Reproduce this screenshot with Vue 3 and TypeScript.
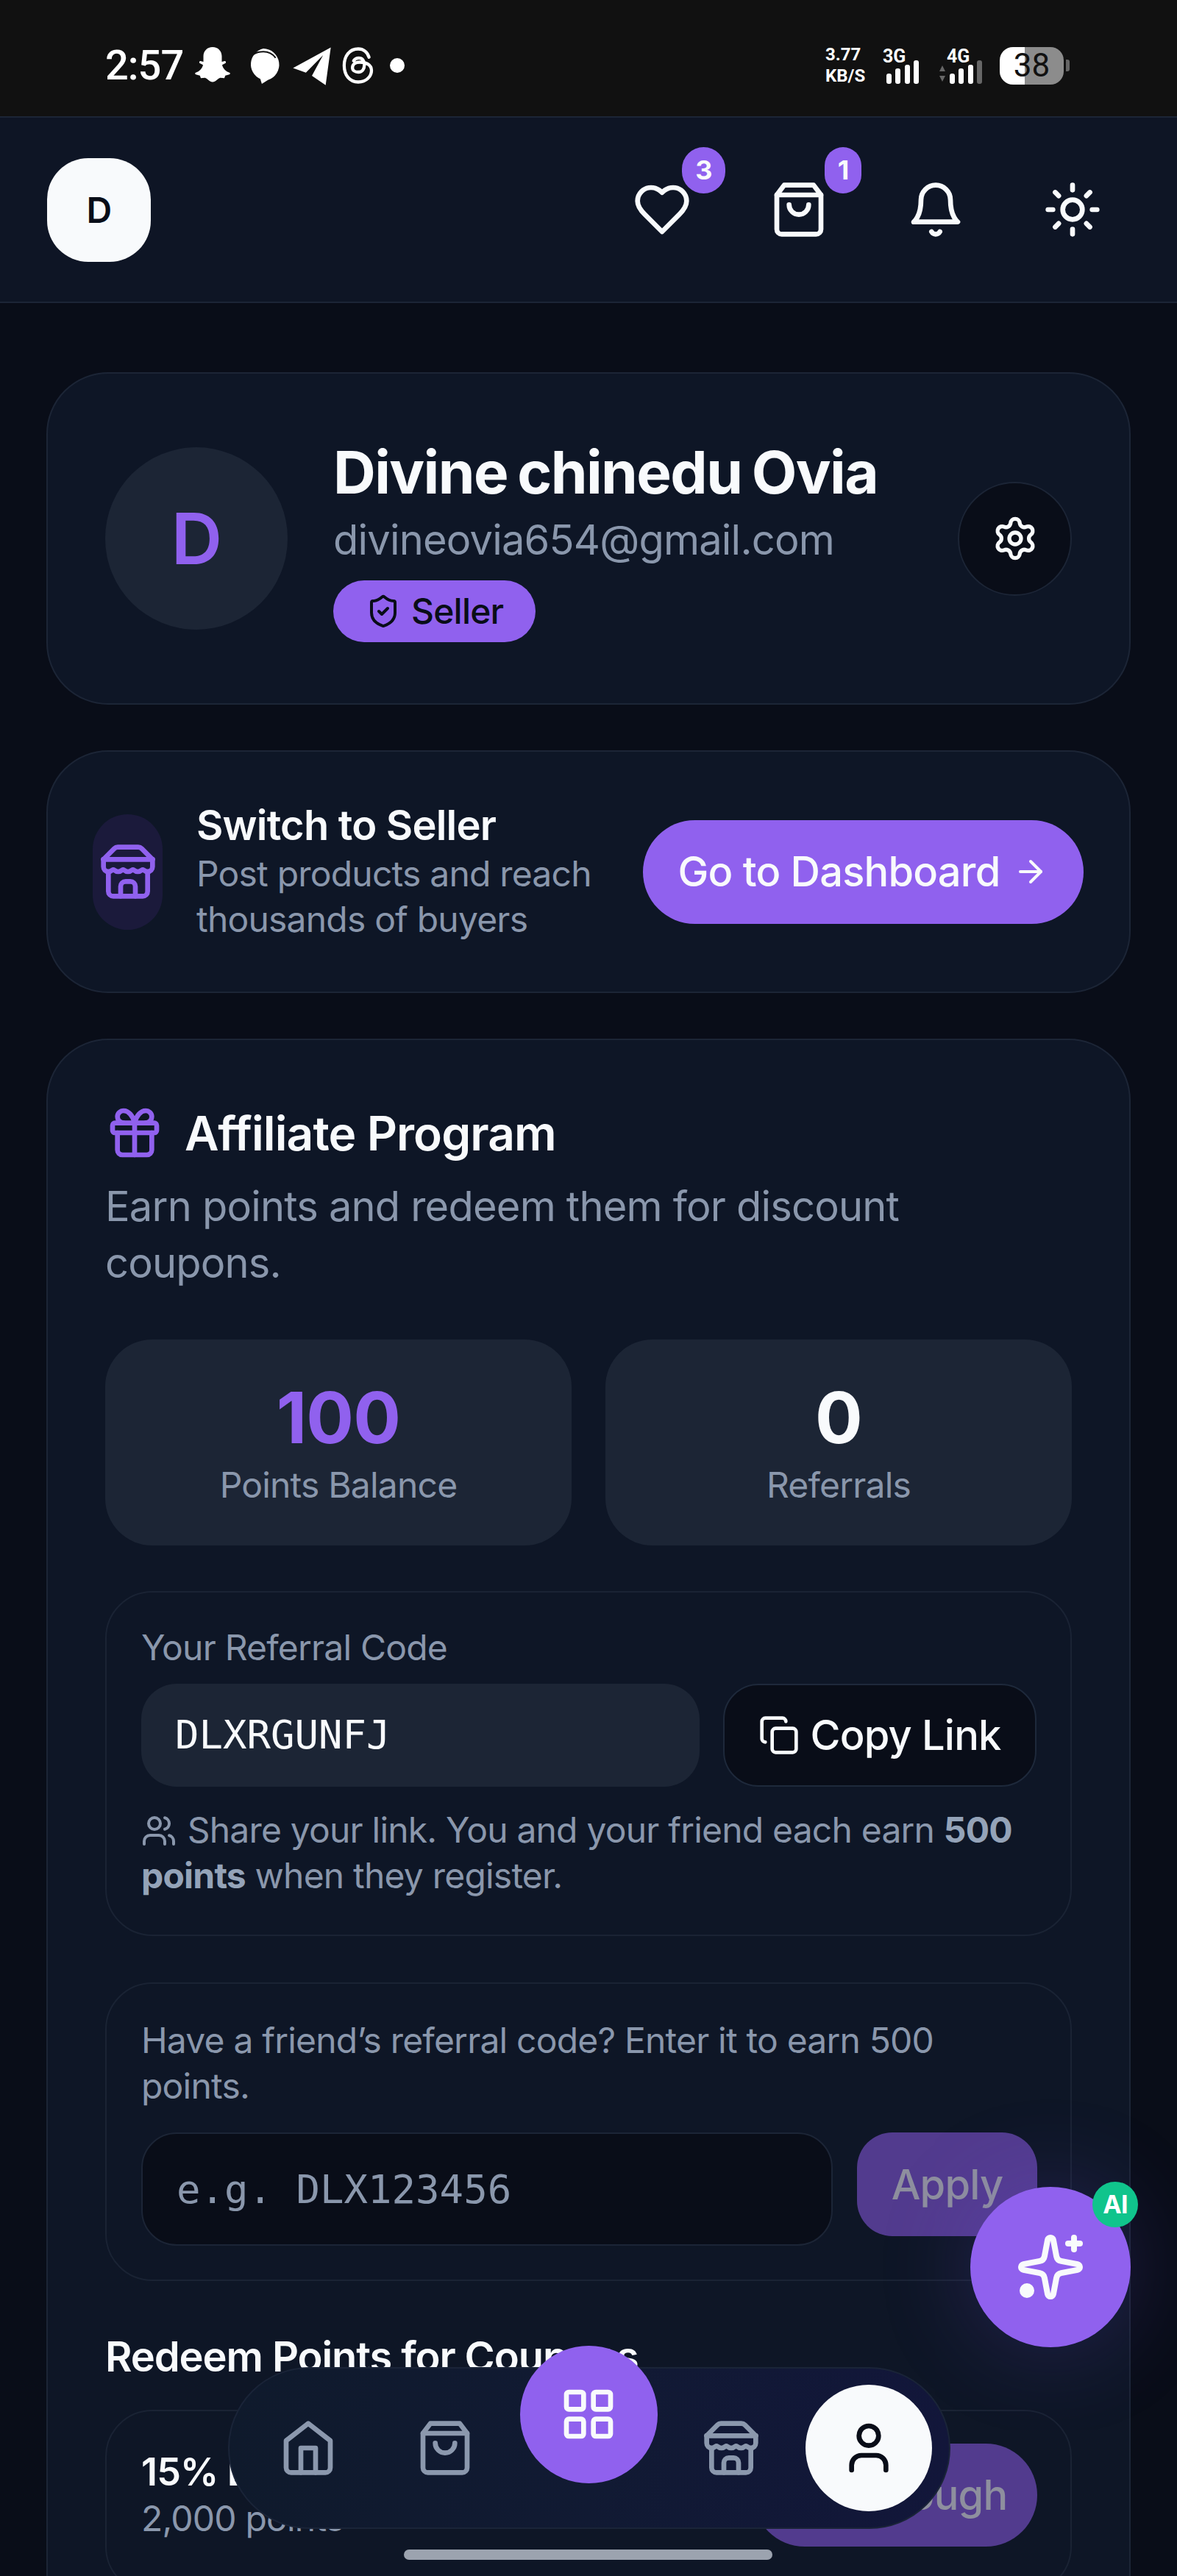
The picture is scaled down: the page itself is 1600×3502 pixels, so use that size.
<template>
  <div class="page">
    <div class="status">
      <span class="time">2:57</span>
      <svg class="st-ic snap" viewBox="0 0 24 24"><path fill="#fff" d="M12 2c3 0 5 2.2 5 5v3l1.6-.4c.6 0 .9.9.3 1.2l-1.7.9c.4 2 2 3.6 4 4.2.5.2.4.8-.1 1l-2.2.6-.5 1.4-2.2-.2c-1.4.3-2.6 2.3-4.2 2.3s-2.8-2-4.2-2.3l-2.2.2-.5-1.4-2.2-.6c-.5-.2-.6-.8-.1-1 2-.6 3.6-2.2 4-4.2l-1.7-.9c-.6-.3-.3-1.2.3-1.2L7 10V7c0-2.8 2-5 5-5z"/></svg>
      <svg class="st-ic bubble" viewBox="0 0 24 24"><path fill="#fff" d="M12 1a10.5 10.5 0 0 1 3 20.5l-4 2.5-1-3.2A10.5 10.5 0 0 1 12 1z"/><path fill="none" stroke="#111" stroke-width="1" d="M2.5 9C4 4.5 8 3 12 3c3.5 0 6 1.300 8 4"/></svg>
      <svg class="st-ic plane" viewBox="0 0 24 24"><path fill="#fff" d="M23 1.500 1 13.500l7.500 2.700L18.500 6 12 18l8 5.500z"/></svg>
      <svg class="st-ic threads" viewBox="0 0 24 24"><path fill="none" stroke="#fff" stroke-width="1.900" stroke-linecap="round" d="M18.500 7C17.500 3.800 15 2 12 2 6.500 2 3.500 6.500 3.500 12S6.500 22 12 22c5 0 8-3.500 8-7 0-3.500-3.500-5-7-5-3 0-4.500 1.500-4.500 3.300 0 1.700 1.500 2.700 3.500 2.700 2.500 0 3.700-1.800 3.700-4.500 0-2.500-1.200-4-3.400-4-1.500 0-2.500.7-3.100 1.700"/></svg>
      <span class="dot"></span>
      <div class="st-right">
        <div class="speed">3.77<br />KB/S</div>
        <div class="net net3">
          <span class="net-label">3G</span>
          <svg class="bars" viewBox="0 0 44 32"><rect x="0" y="18" width="7" height="14" rx="3" fill="#fff" /><rect x="12" y="11" width="7" height="21" rx="3" fill="#fff" /><rect x="25" y="6" width="7" height="26" rx="3" fill="#fff" /><rect x="37" y="0" width="7" height="32" rx="3" fill="#fff" /></svg>
        </div>
        <div class="net net4">
          <svg class="arrows" viewBox="0 0 10 24"><path fill="#666" d="M5 1l4 8H1zM5 23l-4-8h8z" /></svg>
          <span class="net-label">4G</span>
          <svg class="bars" viewBox="0 0 44 32"><rect x="0" y="18" width="7" height="14" rx="3" fill="#fff" /><rect x="12" y="11" width="7" height="21" rx="3" fill="#fff" /><rect x="25" y="6" width="7" height="26" rx="3" fill="#fff" /><rect x="37" y="0" width="7" height="32" rx="3" fill="#666" /></svg>
        </div>
        <div class="battery">38</div>
        <span class="battery-cap"></span>
      </div>
    </div>

    <header class="topbar">
      <div class="logo">D</div>
      <div class="top-actions">
        <div class="top-btn">
          <svg class="ic" viewBox="0 0 24 24" v-html="icons.heart"></svg>
          <span class="count count-wide">3</span>
        </div>
        <div class="top-btn">
          <svg class="ic" viewBox="0 0 24 24" v-html="icons.bag"></svg>
          <span class="count">1</span>
        </div>
        <div class="top-btn">
          <svg class="ic" viewBox="0 0 24 24" v-html="icons.bell"></svg>
        </div>
        <div class="top-btn">
          <svg class="ic" viewBox="0 0 24 24" v-html="icons.sun"></svg>
        </div>
      </div>
    </header>

    <main class="content">
      <section class="card profile">
        <div class="big-avatar">D</div>
        <div class="profile-info">
          <h1 class="name">Divine chinedu Ovia</h1>
          <p class="email">divineovia654@gmail.com</p>
          <span class="role">
            <svg class="ic role-ic" viewBox="0 0 24 24" v-html="icons.shield"></svg>
            Seller
          </span>
        </div>
        <button class="gear">
          <svg class="ic gear-ic" viewBox="0 0 24 24" v-html="icons.settings"></svg>
        </button>
      </section>

      <section class="card switch">
        <div class="store-tile">
          <svg class="ic purple" viewBox="0 0 24 24" v-html="icons.store"></svg>
        </div>
        <div class="switch-text">
          <h2 class="switch-title">Switch to Seller</h2>
          <p class="switch-sub">Post products and reach thousands of buyers</p>
        </div>
        <button class="dash-btn">
          Go to Dashboard
          <svg class="ic arrow-ic" viewBox="0 0 24 24" v-html="icons.arrow"></svg>
        </button>
      </section>

      <section class="card affiliate">
        <div class="aff-head">
          <svg class="ic purple" viewBox="0 0 24 24" v-html="icons.gift"></svg>
          <h2 class="aff-title">Affiliate Program</h2>
        </div>
        <p class="aff-desc">Earn points and redeem them for discount coupons.</p>

        <div class="stats">
          <div v-for="s in stats" :key="s.label" class="stat">
            <div class="stat-value" :class="{ purple: s.accent }">{{ s.value }}</div>
            <div class="stat-label">{{ s.label }}</div>
          </div>
        </div>

        <div class="box referral">
          <div class="box-label">Your Referral Code</div>
          <div class="code-row">
            <div class="code">DLXRGUNFJ</div>
            <button class="copy">
              <svg class="ic copy-ic" viewBox="0 0 24 24" v-html="icons.copy"></svg>
              Copy Link
            </button>
          </div>
          <p class="hint">
            <svg class="ic hint-ic" viewBox="0 0 24 24" v-html="icons.users"></svg>
            Share your link. You and your friend each earn <b>500</b> <b>points</b> when they register.
          </p>
        </div>

        <div class="box friend">
          <div class="friend-label">Have a friend’s referral code? Enter it to earn 500 points.</div>
          <div class="apply-row">
            <input class="code-input" placeholder="e.g. DLX123456" />
            <button class="apply">Apply</button>
          </div>
        </div>

        <h3 class="redeem">Redeem Points for Coupons</h3>
        <div class="box coupon">
          <div>
            <div class="coupon-title">15% Discount</div>
            <div class="coupon-sub">2,000 points</div>
          </div>
          <button class="not-enough">Not enough</button>
        </div>
      </section>
    </main>

    <button class="ai-fab">
      <svg class="ic sparkle" viewBox="0 0 24 24" v-html="icons.sparkles"></svg>
      <span class="ai-badge">AI</span>
    </button>

    <nav class="bottom-nav">
      <div class="nav-slot"><svg class="ic muted" viewBox="0 0 24 24" v-html="icons.home"></svg></div>
      <div class="nav-slot"><svg class="ic muted" viewBox="0 0 24 24" v-html="icons.bag"></svg></div>
      <div class="nav-slot"><div class="nav-center"><svg class="ic" viewBox="0 0 24 24" v-html="icons.grid"></svg></div></div>
      <div class="nav-slot"><svg class="ic muted" viewBox="0 0 24 24" v-html="icons.store"></svg></div>
      <div class="nav-slot"><div class="nav-active"><svg class="ic dark" viewBox="0 0 24 24" v-html="icons.user"></svg></div></div>
    </nav>

    <div class="home-bar"></div>
  </div>
</template>

<script setup lang="ts">
const stats = [
  { value: '100', label: 'Points Balance', accent: true },
  { value: '0', label: 'Referrals', accent: false }
];

// lucide shapes, kept as strings so bag and store can be reused in the nav
const icons: Record<string, string> = {
  heart: '<path d="M19 14c1.49-1.46 3-3.21 3-5.5A5.5 5.5 0 0 0 16.5 3c-1.76 0-3 .5-4.5 2-1.5-1.5-2.74-2-4.5-2A5.5 5.5 0 0 0 2 8.5c0 2.3 1.5 4.05 3 5.5l7 7Z"/>',
  bag: '<path d="M6 2 3 6v14a2 2 0 0 0 2 2h14a2 2 0 0 0 2-2V6l-3-4Z"/><path d="M3 6h18"/><path d="M16 10a4 4 0 0 1-8 0"/>',
  bell: '<path d="M6 8a6 6 0 0 1 12 0c0 7 3 9 3 9H3s3-2 3-9"/><path d="M10.3 21a1.94 1.94 0 0 0 3.4 0"/>',
  sun: '<circle cx="12" cy="12" r="4"/><path d="M12 2v2M12 20v2M4.930 4.930l1.410 1.410M17.660 17.660l1.410 1.410M2 12h2M20 12h2M6.340 17.660l-1.410 1.410M19.070 4.930l-1.410 1.410"/>',
  settings: '<path d="M9.671 4.136a2.34 2.34 0 0 1 4.659 0 2.34 2.34 0 0 0 3.319 1.915 2.34 2.34 0 0 1 2.33 4.033 2.34 2.34 0 0 0 0 3.831 2.34 2.34 0 0 1-2.33 4.033 2.34 2.34 0 0 0-3.319 1.915 2.34 2.34 0 0 1-4.659 0 2.34 2.34 0 0 0-3.32-1.915 2.34 2.34 0 0 1-2.33-4.033 2.34 2.34 0 0 0 0-3.831A2.34 2.34 0 0 1 6.35 6.051a2.34 2.34 0 0 0 3.319-1.915"/><circle cx="12" cy="12" r="3"/>',
  shield: '<path d="M20 13c0 5-3.500 7.500-7.660 8.950a1 1 0 0 1-.67-.01C7.500 20.500 4 18 4 13V6a1 1 0 0 1 1-1c2 0 4.500-1.200 6.240-2.720a1.170 1.170 0 0 1 1.520 0C14.510 3.810 17 5 19 5a1 1 0 0 1 1 1z"/><path d="m9 12 2 2 4-4"/>',
  store: '<path d="m2 7 4.410-4.410A2 2 0 0 1 7.830 2h8.340a2 2 0 0 1 1.420.590L22 7"/><path d="M4 12v8a2 2 0 0 0 2 2h12a2 2 0 0 0 2-2v-8"/><path d="M15 22v-4a2 2 0 0 0-2-2h-2a2 2 0 0 0-2 2v4"/><path d="M2 7h20"/><path d="M22 7v3a2 2 0 0 1-2 2 2.700 2.700 0 0 1-1.590-.630.700.700 0 0 0-.820 0A2.700 2.700 0 0 1 16 12a2.700 2.700 0 0 1-1.590-.630.700.700 0 0 0-.820 0A2.700 2.700 0 0 1 12 12a2.700 2.700 0 0 1-1.590-.630.700.700 0 0 0-.820 0A2.700 2.700 0 0 1 8 12a2.700 2.700 0 0 1-1.590-.630.700.700 0 0 0-.820 0A2.700 2.700 0 0 1 4 12a2 2 0 0 1-2-2V7"/>',
  arrow: '<path d="M5 12h14"/><path d="m12 5 7 7-7 7"/>',
  gift: '<rect x="3" y="8" width="18" height="4" rx="1"/><path d="M12 8v13"/><path d="M19 12v7a2 2 0 0 1-2 2H7a2 2 0 0 1-2-2v-7"/><path d="M7.500 8a2.500 2.500 0 0 1 0-5A4.800 8 0 0 1 12 8a4.800 8 0 0 1 4.500-5 2.500 2.500 0 0 1 0 5"/>',
  copy: '<rect x="8" y="8" width="14" height="14" rx="2"/><path d="M4 16c-1.100 0-2-.9-2-2V4c0-1.100.9-2 2-2h10c1.100 0 2 .9 2 2"/>',
  users: '<path d="M16 21v-2a4 4 0 0 0-4-4H6a4 4 0 0 0-4 4v2"/><circle cx="9" cy="7" r="4"/><path d="M22 21v-2a4 4 0 0 0-3-3.870"/><path d="M16 3.130a4 4 0 0 1 0 7.750"/>',
  sparkles: '<path d="M11.017 2.814a1 1 0 0 1 1.966 0l1.051 5.558a2 2 0 0 0 1.594 1.594l5.558 1.051a1 1 0 0 1 0 1.966l-5.558 1.051a2 2 0 0 0-1.594 1.594l-1.051 5.558a1 1 0 0 1-1.966 0l-1.051-5.558a2 2 0 0 0-1.594-1.594l-5.558-1.051a1 1 0 0 1 0-1.966l5.558-1.051a2 2 0 0 0 1.594-1.594z"/><path d="M20 2v4"/><path d="M22 4h-4"/><circle cx="4" cy="20" r="1.500" fill="#f8fafc"/>',
  home: '<path d="m3 9 9-7 9 7v11a2 2 0 0 1-2 2H5a2 2 0 0 1-2-2z"/><path d="M9 22V12h6v10"/>',
  grid: '<rect x="3" y="3" width="7" height="7" rx="1"/><rect x="14" y="3" width="7" height="7" rx="1"/><rect x="14" y="14" width="7" height="7" rx="1"/><rect x="3" y="14" width="7" height="7" rx="1"/>',
  user: '<path d="M19 21v-2a4 4 0 0 0-4-4H9a4 4 0 0 0-4 4v2"/><circle cx="12" cy="7" r="4"/>'
};
</script>

<style>
html,
body {
  margin: 0;
  background: #090d18;
}
</style>

<style scoped>
.page {
  position: relative;
  width: 1600px;
  height: 3502px;
  overflow: hidden;
  background: #090d18;
  color: #f8fafc;
  font-family: Inter, "Liberation Sans", sans-serif;
  letter-spacing: -0.8px;
}

h1,
h2,
h3,
p {
  margin: 0;
}

button {
  font-family: inherit;
  letter-spacing: inherit;
  border: 0;
  padding: 0;
}

.ic {
  width: 80px;
  height: 80px;
  flex: none;
  fill: none;
  stroke: #f8fafc;
  stroke-width: 2;
  stroke-linecap: round;
  stroke-linejoin: round;
}

.ic.purple {
  stroke: #9061ee;
}

.ic.muted {
  stroke: #8b98ad;
}

.ic.dark {
  stroke: #090d18;
}

/* phone status bar */
.status {
  display: flex;
  align-items: center;
  height: 158px;
  padding: 20px 146px 0 143px;
  box-sizing: border-box;
  background: #111111;
  font-family: Roboto, sans-serif;
  color: #fff;
  letter-spacing: 0;
}

.time {
  font-size: 56px;
  font-weight: 500;
  letter-spacing: -1px;
}

.st-ic {
  flex: none;
}

.snap {
  width: 60px;
  height: 60px;
  margin-left: 10px;
}

.bubble {
  width: 50px;
  height: 50px;
  margin-left: 14px;
}

.plane {
  width: 56px;
  height: 56px;
  margin-left: 13px;
}

.threads {
  width: 54px;
  height: 54px;
  margin-left: 8px;
}

.dot {
  flex: none;
  width: 20px;
  height: 20px;
  margin-left: 16px;
  border-radius: 50%;
  background: #fff;
}

.st-right {
  display: flex;
  align-items: center;
  margin-left: auto;
}

.speed {
  width: 78px;
  font-size: 24px;
  line-height: 29px;
  font-weight: 700;
}

.net {
  position: relative;
  height: 50px;
}

.net3 {
  width: 74px;
}

.net4 {
  width: 85px;
}

.net-label {
  position: absolute;
  top: 0;
  font-size: 25px;
  line-height: 25px;
  font-weight: 700;
}

.net3 .net-label {
  left: 0;
}

.net4 .net-label {
  left: 13px;
}

.bars {
  position: absolute;
  top: 18px;
  width: 44px;
  height: 32px;
}

.net3 .bars {
  left: 5px;
}

.net4 .bars {
  left: 17px;
}

.arrows {
  position: absolute;
  left: 2px;
  top: 24px;
  width: 10px;
  height: 24px;
}

.battery {
  width: 87px;
  height: 51px;
  border-radius: 18px;
  background: linear-gradient(90deg, #fff 39%, #8c8c8c 39%);
  color: #111;
  font-size: 44px;
  line-height: 51px;
  text-align: center;
}

.battery-cap {
  width: 5px;
  height: 16px;
  margin-left: 3px;
  border-radius: 0 3px 3px 0;
  background: #666;
}

/* app bar */
.topbar {
  display: flex;
  align-items: center;
  justify-content: space-between;
  height: 254px;
  padding: 0 102px 0 64px;
  box-sizing: border-box;
  background: #0e1525;
  border-top: 2px solid #1c2536;
  border-bottom: 2px solid #1c2536;
}

.logo {
  display: flex;
  align-items: center;
  justify-content: center;
  width: 141px;
  height: 141px;
  border-radius: 56px;
  background: #f8fafc;
  color: #090d18;
  font-size: 48px;
  font-weight: 600;
}

.top-actions {
  display: flex;
  gap: 106px;
}

.top-btn {
  position: relative;
  width: 80px;
  height: 80px;
}

.count {
  position: absolute;
  top: -45px;
  left: 75px;
  width: 50px;
  height: 63px;
  border-radius: 32px;
  background: #9061ee;
  color: #f8fafc;
  font-size: 36px;
  font-weight: 700;
  line-height: 63px;
  text-align: center;
}

.count-wide {
  left: 67px;
  width: 59px;
}

.content {
  display: flex;
  flex-direction: column;
  gap: 62px;
  padding: 94px 63px 0;
}

.card {
  box-sizing: border-box;
  flex: none;
  border: 2px solid #1c2536;
  border-radius: 84px;
  background: #0e1626;
}

/* profile */
.profile {
  display: flex;
  align-items: center;
  gap: 62px;
  height: 452px;
  padding: 0 78px;
}

.big-avatar {
  display: flex;
  flex: none;
  align-items: center;
  justify-content: center;
  width: 248px;
  height: 248px;
  border-radius: 50%;
  background: #1c2535;
  color: #9061ee;
  font-size: 96px;
  font-weight: 600;
}

.profile-info {
  flex: 1;
  min-width: 0;
  padding-top: 3px;
}

.name {
  font-size: 80px;
  font-weight: 700;
  line-height: 96px;
  letter-spacing: -1.6px;
  word-spacing: -4px;
}

.email {
  margin-top: 6px;
  color: #8a97ac;
  font-size: 56px;
  line-height: 76px;
}

.role {
  display: inline-flex;
  align-items: center;
  gap: 14px;
  height: 84px;
  margin-top: 17px;
  padding: 0 44px 0 44px;
  border-radius: 42px;
  background: #9061ee;
  color: #090d18;
  font-size: 48px;
  font-weight: 500;
  line-height: 80px;
}

.role-ic {
  width: 48px;
  height: 48px;
  stroke: #090d18;
}

.gear {
  display: flex;
  flex: none;
  align-items: center;
  justify-content: center;
  width: 155px;
  height: 155px;
  box-sizing: border-box;
  border: 2px solid #1c2536;
  border-radius: 50%;
  background: #090d18;
}

.gear-ic {
  width: 64px;
  height: 64px;
}

/* switch to seller */
.switch {
  display: flex;
  align-items: center;
  height: 330px;
  padding: 0 62px 0 61px;
}

.store-tile {
  display: flex;
  flex: none;
  align-items: center;
  justify-content: center;
  width: 95px;
  height: 157px;
  border-radius: 48px;
  background: #1b1a3b;
}

.switch-text {
  flex: 1;
  min-width: 0;
  margin-left: 46px;
}

.switch-title {
  font-size: 56px;
  font-weight: 600;
  line-height: 66px;
}

.switch-sub {
  width: 580px;
  margin-top: 2px;
  color: #8a97ac;
  font-size: 48px;
  line-height: 62px;
}

.dash-btn {
  display: flex;
  flex: none;
  align-items: center;
  justify-content: center;
  gap: 18px;
  width: 599px;
  height: 141px;
  border-radius: 71px;
  background: #9061ee;
  color: #f8fafc;
  font-size: 56px;
  font-weight: 500;
}

.arrow-ic {
  width: 48px;
  height: 48px;
}

/* affiliate */
.affiliate {
  height: 2200px;
  padding: 78px 78px 0;
}

.aff-head {
  display: flex;
  align-items: center;
  gap: 28px;
  height: 96px;
}

.aff-title {
  font-size: 64px;
  font-weight: 600;
  letter-spacing: -0.9px;
}

.aff-desc {
  margin-top: 14px;
  color: #8a97ac;
  font-size: 56px;
  line-height: 77px;
}

.stats {
  display: grid;
  grid-template-columns: 1fr 1fr;
  gap: 46px;
  margin-top: 65px;
}

.stat {
  height: 280px;
  border-radius: 64px;
  background: #1c2535;
  padding-top: 48px;
  box-sizing: border-box;
  text-align: center;
}

.stat-value {
  font-size: 96px;
  font-weight: 700;
  line-height: 116px;
}

.stat-value.purple {
  color: #9061ee;
}

.stat-label {
  margin-top: 4px;
  color: #8a97ac;
  font-size: 48px;
  line-height: 60px;
}

.box {
  box-sizing: border-box;
  border: 2px solid #1a2334;
  border-radius: 64px;
}

.referral {
  height: 469px;
  margin-top: 62px;
  padding: 46px 46px 0 47px;
}

.box-label {
  color: #8a97ac;
  font-size: 48px;
  line-height: 58px;
}

.code-row {
  display: flex;
  gap: 32px;
  margin-top: 20px;
}

.code {
  flex: 1;
  height: 140px;
  padding-left: 46px;
  box-sizing: border-box;
  border-radius: 48px;
  background: #1c2535;
  font-family: "DejaVu Sans Mono", monospace;
  font-size: 54px;
  line-height: 140px;
  letter-spacing: 0;
}

.copy {
  display: flex;
  flex: none;
  align-items: center;
  justify-content: center;
  gap: 14px;
  width: 426px;
  height: 140px;
  box-sizing: border-box;
  border: 2px solid #1e293b;
  border-radius: 48px;
  background: #090d18;
  color: #f8fafc;
  font-size: 56px;
  font-weight: 500;
}

.copy-ic {
  width: 56px;
  height: 56px;
}

.hint {
  margin-top: 28px;
  color: #8a97ac;
  font-size: 48px;
  line-height: 62px;
}

.hint b {
  font-weight: 700;
  color: #94a3b8;
}

.hint-ic {
  width: 48px;
  height: 48px;
  margin-right: 2px;
  stroke: #8a97ac;
  vertical-align: -8px;
}

.friend {
  height: 406px;
  margin-top: 63px;
  padding: 46px 45px 0 47px;
}

.friend-label {
  color: #8a97ac;
  font-size: 48px;
  line-height: 62px;
}

.apply-row {
  display: flex;
  align-items: flex-start;
  gap: 33px;
  margin-top: 32px;
}

.code-input {
  flex: 1;
  min-width: 0;
  height: 154px;
  padding: 0 0 0 46px;
  box-sizing: border-box;
  border: 2px solid #1c2536;
  border-radius: 48px;
  outline: none;
  background: #090d18;
  color: #f8fafc;
  font-family: "DejaVu Sans Mono", monospace;
  font-size: 54px;
}

.code-input::placeholder {
  color: #8a97ac;
  opacity: 1;
}

.apply {
  flex: none;
  width: 245px;
  height: 141px;
  border-radius: 48px;
  background: #523b8e;
  color: #8e8f9e;
  font-size: 56px;
  font-weight: 500;
}

.redeem {
  margin-top: 71px;
  font-size: 56px;
  font-weight: 600;
  line-height: 64px;
  letter-spacing: -1.1px;
}

.coupon {
  display: flex;
  align-items: center;
  justify-content: space-between;
  height: 250px;
  margin-top: 40px;
  padding: 0 45px 18px 47px;
}

.coupon-title {
  font-size: 52px;
  font-weight: 600;
  line-height: 64px;
}

.coupon-sub {
  color: #8a97ac;
  font-size: 48px;
  line-height: 62px;
}

.not-enough {
  width: 386px;
  height: 140px;
  border-radius: 70px;
  background: #523b8e;
  color: #8e8f9e;
  font-size: 56px;
  font-weight: 500;
}

/* floating things */
.ai-fab {
  position: absolute;
  left: 1319px;
  top: 2973px;
  display: flex;
  align-items: center;
  justify-content: center;
  width: 218px;
  height: 218px;
  border-radius: 50%;
  background: #9061ee;
  box-shadow: 0 0 130px rgba(120, 80, 230, 0.22);
}

.sparkle {
  width: 96px;
  height: 96px;
}

.ai-badge {
  position: absolute;
  left: 166px;
  top: -7px;
  width: 62px;
  height: 62px;
  border-radius: 50%;
  background: #10c48c;
  color: #fff;
  font-size: 34px;
  font-weight: 700;
  line-height: 62px;
  text-align: center;
}

.bottom-nav {
  position: absolute;
  left: 310px;
  top: 3218px;
  display: grid;
  grid-template-columns: 186px 186px 204px 184px 190px;
  width: 982px;
  height: 220px;
  padding-left: 14px;
  box-sizing: border-box;
  border: 2px solid #1a2438;
  border-radius: 110px;
  background: linear-gradient(90deg, #0f1a2c 0%, #111a33 50%, #12163a 100%);
}

.nav-slot {
  display: flex;
  align-items: center;
  justify-content: center;
}

.nav-center {
  display: flex;
  align-items: center;
  justify-content: center;
  flex: none;
  width: 187px;
  height: 187px;
  border-radius: 50%;
  background: #9061ee;
  transform: translateY(-46px);
}

.nav-active {
  display: flex;
  align-items: center;
  justify-content: center;
  flex: none;
  width: 172px;
  height: 172px;
  border-radius: 50%;
  background: #f8fafc;
}

.home-bar {
  position: absolute;
  left: 549px;
  top: 3466px;
  width: 501px;
  height: 14px;
  border-radius: 7px;
  background: #9ca3af;
}
</style>
